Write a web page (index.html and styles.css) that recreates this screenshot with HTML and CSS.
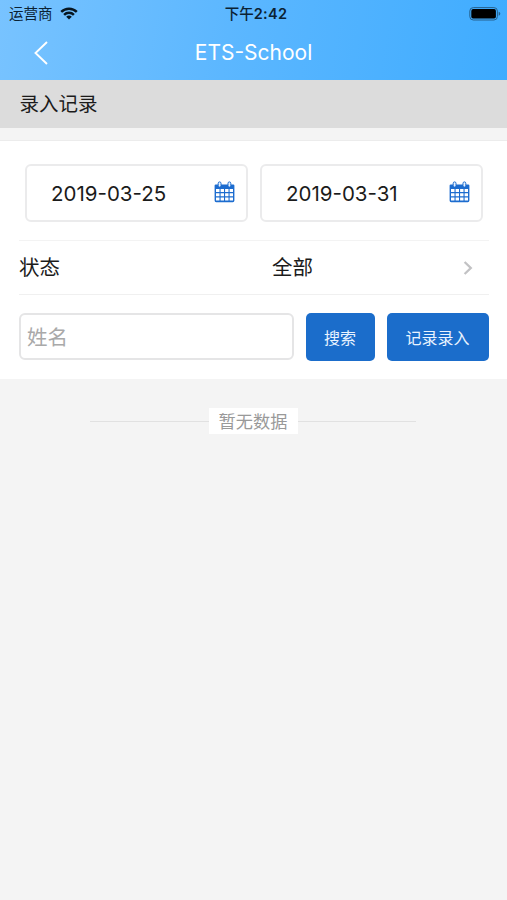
FILE: index.html
```html
<!DOCTYPE html>
<html lang="zh-CN">
<head>
<meta charset="utf-8">
<meta name="viewport" content="width=device-width, initial-scale=1">
<title>ETS-School</title>
<link rel="stylesheet" href="styles.css">
</head>
<body>
<header class="top">
  <div class="status">
    <div class="carrier"><span>运营商</span>
      <svg class="wifi" width="18" height="13" viewBox="0 0 18 13"><g fill="none" stroke="#071621" stroke-width="2.5"><path d="M1.2 4.8a11.2 11.2 0 0 1 15.6 0"/><path d="M4.1 7.8a7 7 0 0 1 9.8 0"/></g><path d="M6.2 9.8a4 4 0 0 1 5.6 0L9 12.6z" fill="#071621"/></svg>
    </div>
    <div class="time">下午<b>2:42</b></div>
    <svg class="battery" width="32" height="14" viewBox="0 0 32 14"><rect x=".8" y=".6" width="27.6" height="12.4" rx="3.5" fill="none" stroke="#26618d" stroke-width="1"/><rect x="2.3" y="2.1" width="24.6" height="9.4" rx="1.8"/><path d="M29.7 4.8v4q1.6-.6 1.6-2t-1.6-2" fill="#26618d"/></svg>
  </div>
  <nav class="nav">
    <svg class="back" width="16" height="26" viewBox="0 0 16 26"><path d="M14 2 2.5 13 14 24" fill="none" stroke="#fff" stroke-width="1.9"/></svg>
    <h1 class="title">ETS-School</h1>
  </nav>
</header>
<h2 class="section">录入记录</h2>
<main class="panel">
  <div class="dates">
    <div class="date"><span>2019-03-25</span>
      <svg width="21" height="22" viewBox="0 0 21 22"><path d="M1.8 3.4h17.4q1.2 0 1.2 1.2v15q0 1.6-1.6 1.6H2.2q-1.6 0-1.6-1.6v-15q0-1.2 1.2-1.2z" fill="#1c6ccf"/><path d="M2 8h3.5v3H2zM6.6 8h3.4v3H6.6zM11.1 8h3.4v3h-3.4zM15.6 8H19v3h-3.4zM2 12.2h3.5v3H2zM6.6 12.2h3.4v3H6.6zM11.1 12.2h3.4v3h-3.4zM15.6 12.2H19v3h-3.4zM2 16.4h3.5v3.2H2zM6.6 16.4h3.4v3.2H6.6zM11.1 16.4h3.4v3.2h-3.4zM15.6 16.4H19v3.2h-3.4z" fill="#fff"/><g fill="#e8f3ff" stroke="#1c6ccf" stroke-width="1"><rect x="4.2" y=".9" width="2.8" height="5.2" rx="1.4"/><rect x="14" y=".9" width="2.8" height="5.2" rx="1.4"/></g></svg>
    </div>
    <div class="date"><span>2019-03-31</span>
      <svg width="21" height="22" viewBox="0 0 21 22"><path d="M1.8 3.4h17.4q1.2 0 1.2 1.2v15q0 1.6-1.6 1.6H2.2q-1.6 0-1.6-1.6v-15q0-1.2 1.2-1.2z" fill="#1c6ccf"/><path d="M2 8h3.5v3H2zM6.6 8h3.4v3H6.6zM11.1 8h3.4v3h-3.4zM15.6 8H19v3h-3.4zM2 12.2h3.5v3H2zM6.6 12.2h3.4v3H6.6zM11.1 12.2h3.4v3h-3.4zM15.6 12.2H19v3h-3.4zM2 16.4h3.5v3.2H2zM6.6 16.4h3.4v3.2H6.6zM11.1 16.4h3.4v3.2h-3.4zM15.6 16.4H19v3.2h-3.4z" fill="#fff"/><g fill="#e8f3ff" stroke="#1c6ccf" stroke-width="1"><rect x="4.2" y=".9" width="2.8" height="5.2" rx="1.4"/><rect x="14" y=".9" width="2.8" height="5.2" rx="1.4"/></g></svg>
    </div>
  </div>
  <div class="state">
    <span class="label">状态</span><span class="value">全部</span>
    <svg width="10" height="14" viewBox="0 0 10 14"><path d="M1.6 1 7.8 7l-6.2 6" fill="none" stroke="#c2c2c4" stroke-width="2.3"/></svg>
  </div>
  <div class="search">
    <input class="name" type="text" placeholder="姓名">
    <button class="btn find">搜索</button>
    <button class="btn add">记录录入</button>
  </div>
</main>
<div class="empty"><span>暂无数据</span></div>
</body>
</html>
```
FILE: styles.css
```css
* { box-sizing: border-box; }
body { margin: 0; min-height: 900px; background: #f4f4f4; color: #1b1b1b; font-family: Inter, "Noto Sans CJK SC", sans-serif; }
svg { display: block; flex: none; }
.top { height: 80px; background: linear-gradient(100deg, #78c3ff 0%, #5cb7ff 45%, #3facff 100%); }
.status { height: 27px; padding: 0 6px 0 9px; display: grid; grid-template-columns: 1fr auto 1fr; align-items: center; color: #0b2233; font-size: 14.5px; line-height: 27px; }
.carrier { display: flex; align-items: center; gap: 7px; }
.time { font-weight: 500; padding-left: 2px; white-space: nowrap; font-size: 14.5px; }
.time b { font-weight: 600; font-size: 14.5px; letter-spacing: .3px; }
.battery { justify-self: end; }
.nav { height: 53px; display: grid; grid-template-columns: 48px 1fr 48px; align-items: center; }
.back { margin: 0 0 2px 33px; }
.title { margin: 0; color: #fff; font-size: 21px; line-height: 50px; font-weight: 400; text-align: center; padding-bottom: 1px; }
.section { margin: 0 0 12px; height: 48px; padding-left: 19.5px; background: #dcdcdc; font-size: 19.5px; line-height: 49px; font-weight: 400; }
.panel { height: 239px; padding: 0 18px 0 19px; background: #fff; border-top: 1px solid #ececec; }
.dates { height: 100px; padding: 23px 6px 18px; display: flex; gap: 12px; border-bottom: 1px solid #f3f3f3; }
.date { flex: 1; display: flex; align-items: center; justify-content: space-between; padding: 0 11px 0 24px; border: 2px solid #ebebec; border-radius: 6px; font-size: 20.5px; }
.date svg { margin-bottom: 2px; }
.state { height: 54px; display: flex; align-items: center; border-bottom: 1px solid #f0f0f0; font-size: 20.5px; line-height: 54px; }
.label { width: 253px; }
.value { flex: 1; padding-top: 1px; }
.state svg { margin-right: 16px; }
.search { padding-top: 18px; display: flex; gap: 12px; }
.name { width: 275px; height: 47px; margin: 0; padding: 1px 6px 0; border: 2px solid #e5e5e6; border-radius: 6px; background: #fff; font: inherit; font-size: 20.5px; outline: none; }
.name::placeholder { color: #a9a9a9; opacity: 1; }
.btn { height: 48px; padding: 0 1px 1px 0; border: 0; border-radius: 5px; background: #1b6dcb; color: #e9f3ff; font: inherit; font-size: 16px; }
.find { width: 69px; }
.add { flex: 1; }
.empty { width: 326px; margin: 29px 0 0 90px; display: flex; align-items: center; }
.empty::before, .empty::after { content: ""; flex: 1; height: 1px; background: #e1e1e1; }
.empty span { width: 89px; height: 26px; background: #fff; color: #999; font-size: 17.2px; line-height: 28px; text-align: center; }
```
